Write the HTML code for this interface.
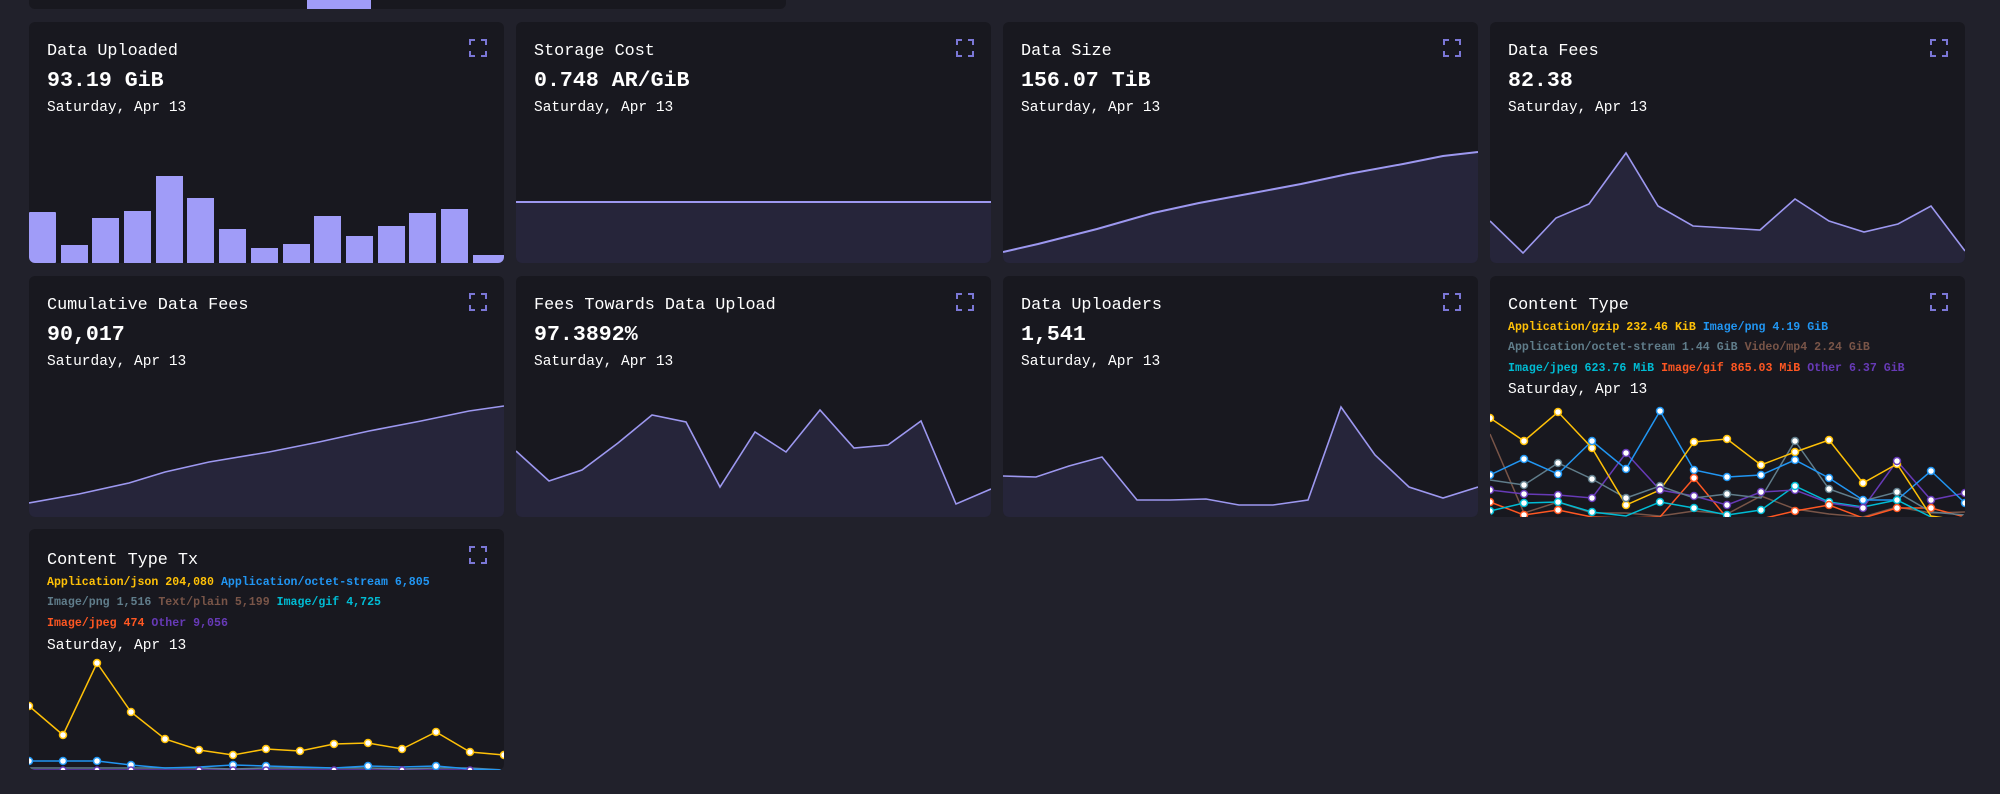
<!DOCTYPE html>
<html><head><meta charset="utf-8"><style>
*{margin:0;padding:0;box-sizing:border-box}
body{width:2000px;height:794px;background:#21212b;position:relative;overflow:hidden;font-family:"Liberation Mono",monospace;color:#fff}
.card{position:absolute;width:475px;height:241px;background:#18181f;border-radius:6px;overflow:hidden}
.t{position:absolute;left:18px;top:19px;font-size:16.8px;line-height:22px;white-space:nowrap}
.v{position:absolute;left:18px;top:45px;font-size:21.6px;font-weight:bold;line-height:28px;white-space:nowrap}
.d{position:absolute;left:18px;top:76px;font-size:14.5px;line-height:20px;white-space:nowrap}
.ic{position:absolute;right:17px;top:17px;width:18px;height:18px}
svg.ch{position:absolute;left:0;top:0}
.lg{position:absolute;left:18px;font-size:11.6px;font-weight:bold;line-height:16px;white-space:nowrap}
</style></head><body>
<div style="position:absolute;left:29px;top:0;width:757px;height:9px;background:#18181f;border-radius:0 0 6px 6px"></div>
<div style="position:absolute;left:307px;top:0;width:64px;height:9px;background:#a09cf8"></div>

<!-- Row 1 -->
<div class="card" style="left:29px;top:22px">
<svg class="ch" width="475" height="241" fill="#a09cf8">
<rect x="0" y="190" width="27" height="51" rx="1"/><rect x="32" y="223" width="27" height="18"/><rect x="63" y="196" width="27" height="45"/><rect x="95" y="189" width="27" height="52"/><rect x="127" y="154" width="27" height="87"/><rect x="158" y="176" width="27" height="65"/><rect x="190" y="207" width="27" height="34"/><rect x="222" y="226" width="27" height="15"/><rect x="254" y="222" width="27" height="19"/><rect x="285" y="194" width="27" height="47"/><rect x="317" y="214" width="27" height="27"/><rect x="349" y="204" width="27" height="37"/><rect x="380" y="191" width="27" height="50"/><rect x="412" y="187" width="27" height="54"/><rect x="444" y="233" width="31" height="8"/>
</svg>
<div class="t">Data Uploaded</div><div class="v">93.19 GiB</div><div class="d">Saturday, Apr 13</div>
<svg class="ic" viewBox="0 0 18 18" fill="none" stroke="#7b77d6" stroke-width="2"><path d="M1 6V1h5M12 1h5v5M17 12v5h-5M6 17H1v-5"/></svg>
</div>

<div class="card" style="left:516px;top:22px">
<svg class="ch" width="475" height="241"><rect x="0" y="180" width="475" height="61" fill="#26253a"/><line x1="0" y1="180" x2="475" y2="180" stroke="#9d98f0" stroke-width="2"/></svg>
<div class="t">Storage Cost</div><div class="v">0.748 AR/GiB</div><div class="d">Saturday, Apr 13</div>
<svg class="ic" viewBox="0 0 18 18" fill="none" stroke="#7b77d6" stroke-width="2"><path d="M1 6V1h5M12 1h5v5M17 12v5h-5M6 17H1v-5"/></svg>
</div>

<div class="card" style="left:1003px;top:22px">
<svg class="ch" width="475" height="241"><path d="M0 230L35 222L94 207L150 191L196 181L250 171L298 162L345 152L400 142L440 134L475 130V241H0Z" fill="#26253a"/><path d="M0 230L35 222L94 207L150 191L196 181L250 171L298 162L345 152L400 142L440 134L475 130" fill="none" stroke="#9d98f0" stroke-width="2"/></svg>
<div class="t">Data Size</div><div class="v">156.07 TiB</div><div class="d">Saturday, Apr 13</div>
<svg class="ic" viewBox="0 0 18 18" fill="none" stroke="#7b77d6" stroke-width="2"><path d="M1 6V1h5M12 1h5v5M17 12v5h-5M6 17H1v-5"/></svg>
</div>

<div class="card" style="left:1490px;top:22px">
<svg class="ch" width="475" height="241"><path d="M0 199L33 231L66 196L99 182L136 131L168 184L203 204L237 206L270 208L305 177L339 199L374 210L408 202L441 184L475 229V241H0Z" fill="#26253a"/><path d="M0 199L33 231L66 196L99 182L136 131L168 184L203 204L237 206L270 208L305 177L339 199L374 210L408 202L441 184L475 229" fill="none" stroke="#9d98f0" stroke-width="1.6"/></svg>
<div class="t">Data Fees</div><div class="v">82.38</div><div class="d">Saturday, Apr 13</div>
<svg class="ic" viewBox="0 0 18 18" fill="none" stroke="#7b77d6" stroke-width="2"><path d="M1 6V1h5M12 1h5v5M17 12v5h-5M6 17H1v-5"/></svg>
</div>

<!-- Row 2 -->
<div class="card" style="left:29px;top:276px">
<svg class="ch" width="475" height="241"><path d="M0 227L50 218L100 207L136 196L180 186L240 176L290 166L340 155L392 145L440 135L475 130V241H0Z" fill="#26253a"/><path d="M0 227L50 218L100 207L136 196L180 186L240 176L290 166L340 155L392 145L440 135L475 130" fill="none" stroke="#9d98f0" stroke-width="1.6"/></svg>
<div class="t">Cumulative Data Fees</div><div class="v">90,017</div><div class="d">Saturday, Apr 13</div>
<svg class="ic" viewBox="0 0 18 18" fill="none" stroke="#7b77d6" stroke-width="2"><path d="M1 6V1h5M12 1h5v5M17 12v5h-5M6 17H1v-5"/></svg>
</div>

<div class="card" style="left:516px;top:276px">
<svg class="ch" width="475" height="241"><path d="M0 175L33 205L66 194L102 167L136 139L170 146L204 211L239 156L270 176L304 134L338 172L372 169L405 145L440 228L475 213V241H0Z" fill="#26253a"/><path d="M0 175L33 205L66 194L102 167L136 139L170 146L204 211L239 156L270 176L304 134L338 172L372 169L405 145L440 228L475 213" fill="none" stroke="#9d98f0" stroke-width="1.6"/></svg>
<div class="t">Fees Towards Data Upload</div><div class="v">97.3892%</div><div class="d">Saturday, Apr 13</div>
<svg class="ic" viewBox="0 0 18 18" fill="none" stroke="#7b77d6" stroke-width="2"><path d="M1 6V1h5M12 1h5v5M17 12v5h-5M6 17H1v-5"/></svg>
</div>

<div class="card" style="left:1003px;top:276px">
<svg class="ch" width="475" height="241"><path d="M0 200L33 201L66 190L99 181L134 224L167 224L203 223L236 229L270 229L305 224L338 131L372 179L406 211L440 222L475 211V241H0Z" fill="#26253a"/><path d="M0 200L33 201L66 190L99 181L134 224L167 224L203 223L236 229L270 229L305 224L338 131L372 179L406 211L440 222L475 211" fill="none" stroke="#9d98f0" stroke-width="1.6"/></svg>
<div class="t">Data Uploaders</div><div class="v">1,541</div><div class="d">Saturday, Apr 13</div>
<svg class="ic" viewBox="0 0 18 18" fill="none" stroke="#7b77d6" stroke-width="2"><path d="M1 6V1h5M12 1h5v5M17 12v5h-5M6 17H1v-5"/></svg>
</div>

<div class="card" style="left:1490px;top:276px">
<div class="t" style="top:19px">Content Type</div>
<div class="lg" style="top:44px"><span style="color:#ffc107">Application/gzip 232.46 KiB</span> <span style="color:#2196f3">Image/png 4.19 GiB</span></div>
<div class="lg" style="top:64px"><span style="color:#607d8b">Application/octet-stream 1.44 GiB</span> <span style="color:#795548">Video/mp4 2.24 GiB</span></div>
<div class="lg" style="top:85px"><span style="color:#00bcd4">Image/jpeg 623.76 MiB</span> <span style="color:#ff5722">Image/gif 865.03 MiB</span> <span style="color:#673ab7">Other 6.37 GiB</span></div>
<div class="d" style="top:104px">Saturday, Apr 13</div>
<svg class="ch" width="475" height="241" fill="#fff" stroke-width="1.5">
<g stroke="#795548"><polyline fill="none" points="0,158 34,237 68,226 102,237 136,237 170,240 204,235 237,238 271,220 305,233 339,238 373,241 407,231 441,237 475,236"/></g>
<g stroke="#ff5722"><polyline fill="none" points="0,226 34,239 68,234 102,241 136,242 170,241 204,202 237,242 271,243 305,235 339,229 373,242 407,232 441,232 475,241"/></g>
<g stroke="#00bcd4"><polyline fill="none" points="0,235 34,227 68,226 102,236 136,240 170,226 204,232 237,239 271,234 305,210 339,226 373,231 407,224 441,241 475,244"/></g>
<g stroke="#673ab7"><polyline fill="none" points="0,214 34,218 68,219 102,222 136,177 170,214 204,220 237,229 271,216 305,214 339,227 373,232 407,185 441,224 475,217"/></g>
<g stroke="#607d8b"><polyline fill="none" points="0,204 34,209 68,187 102,203 136,222 170,210 204,222 237,218 271,222 305,165 339,213 373,225 407,216 441,236 475,239"/></g>
<g stroke="#2196f3"><polyline fill="none" points="0,199 34,183 68,198 102,165 136,193 170,135 204,194 237,201 271,199 305,184 339,202 373,224 407,224 441,195 475,227"/></g>
<g stroke="#ffc107"><polyline fill="none" points="0,142 34,165 68,136 102,172 136,229 170,214 204,166 237,163 271,189 305,176 339,164 373,207 407,188 441,240 475,245"/></g>
<g stroke="#ffc107"><circle cx="0" cy="142" r="3.5"/><circle cx="34" cy="165" r="3.5"/><circle cx="68" cy="136" r="3.5"/><circle cx="102" cy="172" r="3.5"/><circle cx="136" cy="229" r="3.5"/><circle cx="204" cy="166" r="3.5"/><circle cx="237" cy="163" r="3.5"/><circle cx="271" cy="189" r="3.5"/><circle cx="305" cy="176" r="3.5"/><circle cx="339" cy="164" r="3.5"/><circle cx="373" cy="207" r="3.5"/><circle cx="407" cy="188" r="3.5"/></g>
<g stroke="#2196f3"><circle cx="0" cy="199" r="3.5"/><circle cx="34" cy="183" r="3.5"/><circle cx="68" cy="198" r="3.5"/><circle cx="102" cy="165" r="3.5"/><circle cx="136" cy="193" r="3.5"/><circle cx="170" cy="135" r="3.5"/><circle cx="204" cy="194" r="3.5"/><circle cx="237" cy="201" r="3.5"/><circle cx="271" cy="199" r="3.5"/><circle cx="305" cy="184" r="3.5"/><circle cx="339" cy="202" r="3.5"/><circle cx="373" cy="224" r="3.5"/><circle cx="441" cy="195" r="3.5"/><circle cx="475" cy="227" r="3.5"/></g>
<g stroke="#607d8b"><circle cx="34" cy="209" r="3.5"/><circle cx="68" cy="187" r="3.5"/><circle cx="102" cy="203" r="3.5"/><circle cx="136" cy="222" r="3.5"/><circle cx="170" cy="210" r="3.5"/><circle cx="237" cy="218" r="3.5"/><circle cx="305" cy="165" r="3.5"/><circle cx="339" cy="213" r="3.5"/><circle cx="407" cy="216" r="3.5"/></g>
<g stroke="#673ab7"><circle cx="0" cy="214" r="3.5"/><circle cx="34" cy="218" r="3.5"/><circle cx="68" cy="219" r="3.5"/><circle cx="102" cy="222" r="3.5"/><circle cx="136" cy="177" r="3.5"/><circle cx="170" cy="214" r="3.5"/><circle cx="204" cy="220" r="3.5"/><circle cx="237" cy="229" r="3.5"/><circle cx="271" cy="216" r="3.5"/><circle cx="305" cy="214" r="3.5"/><circle cx="339" cy="227" r="3.5"/><circle cx="373" cy="232" r="3.5"/><circle cx="407" cy="185" r="3.5"/><circle cx="441" cy="224" r="3.5"/><circle cx="475" cy="217" r="3.5"/></g>
<g stroke="#00bcd4"><circle cx="0" cy="235" r="3.5"/><circle cx="34" cy="227" r="3.5"/><circle cx="68" cy="226" r="3.5"/><circle cx="102" cy="236" r="3.5"/><circle cx="170" cy="226" r="3.5"/><circle cx="204" cy="232" r="3.5"/><circle cx="237" cy="239" r="3.5"/><circle cx="271" cy="234" r="3.5"/><circle cx="305" cy="210" r="3.5"/><circle cx="339" cy="226" r="3.5"/><circle cx="407" cy="224" r="3.5"/></g>
<g stroke="#ff5722"><circle cx="0" cy="226" r="3.5"/><circle cx="34" cy="239" r="3.5"/><circle cx="68" cy="234" r="3.5"/><circle cx="204" cy="202" r="3.5"/><circle cx="305" cy="235" r="3.5"/><circle cx="339" cy="229" r="3.5"/><circle cx="407" cy="232" r="3.5"/><circle cx="441" cy="232" r="3.5"/></g>
</svg>
<svg class="ic" viewBox="0 0 18 18" fill="none" stroke="#7b77d6" stroke-width="2"><path d="M1 6V1h5M12 1h5v5M17 12v5h-5M6 17H1v-5"/></svg>
</div>

<!-- Row 3 -->
<div class="card" style="left:29px;top:529px">
<div class="t" style="top:21px">Content Type Tx</div>
<div class="lg" style="top:46px"><span style="color:#ffc107">Application/json 204,080</span> <span style="color:#2196f3">Application/octet-stream 6,805</span></div>
<div class="lg" style="top:66px"><span style="color:#607d8b">Image/png 1,516</span> <span style="color:#795548">Text/plain 5,199</span> <span style="color:#00bcd4">Image/gif 4,725</span></div>
<div class="lg" style="top:87px"><span style="color:#ff5722">Image/jpeg 474</span> <span style="color:#673ab7">Other 9,056</span></div>
<div class="d" style="top:107px">Saturday, Apr 13</div>
<svg class="ch" width="475" height="241" fill="#fff" stroke-width="1.5">
<polyline fill="none" stroke="#673ab7" points="0,241 34,241 68,241 102,241 136,241 170,241 204,241 237,241 271,241 305,241 339,241 373,241 407,241 441,241 475,241"/>
<polyline fill="none" stroke="#607d8b" points="0,239 34,239 68,239 102,239 136,239 170,239 204,240 237,239 271,239 305,239 339,239 373,240 407,239 441,239 475,241"/>
<polyline fill="none" stroke="#2196f3" points="0,232 34,232 68,232 102,236 136,239 170,238 204,236 237,237 271,238 305,239 339,237 373,238 407,237 441,240 475,241"/>
<polyline fill="none" stroke="#ffc107" points="0,177 34,206 68,134 102,183 136,210 170,221 204,226 237,220 271,222 305,215 339,214 373,220 407,203 441,223 475,226"/>
<g stroke="#ffc107"><circle cx="0" cy="177" r="3.5"/><circle cx="34" cy="206" r="3.5"/><circle cx="68" cy="134" r="3.5"/><circle cx="102" cy="183" r="3.5"/><circle cx="136" cy="210" r="3.5"/><circle cx="170" cy="221" r="3.5"/><circle cx="204" cy="226" r="3.5"/><circle cx="237" cy="220" r="3.5"/><circle cx="271" cy="222" r="3.5"/><circle cx="305" cy="215" r="3.5"/><circle cx="339" cy="214" r="3.5"/><circle cx="373" cy="220" r="3.5"/><circle cx="407" cy="203" r="3.5"/><circle cx="441" cy="223" r="3.5"/><circle cx="475" cy="226" r="3.5"/></g>
<g stroke="#2196f3"><circle cx="0" cy="232" r="3.5"/><circle cx="34" cy="232" r="3.5"/><circle cx="68" cy="232" r="3.5"/><circle cx="102" cy="236" r="3.5"/><circle cx="204" cy="236" r="3.5"/><circle cx="237" cy="237" r="3.5"/><circle cx="339" cy="237" r="3.5"/><circle cx="407" cy="237" r="3.5"/></g>
<g stroke="#673ab7"><circle cx="34" cy="241" r="3"/><circle cx="68" cy="241" r="3"/><circle cx="102" cy="241" r="3"/><circle cx="170" cy="241" r="3"/><circle cx="204" cy="241" r="3"/><circle cx="237" cy="241" r="3"/><circle cx="305" cy="241" r="3"/><circle cx="373" cy="241" r="3"/><circle cx="441" cy="241" r="3"/></g>
</svg>
<svg class="ic" viewBox="0 0 18 18" fill="none" stroke="#7b77d6" stroke-width="2"><path d="M1 6V1h5M12 1h5v5M17 12v5h-5M6 17H1v-5"/></svg>
</div>
</body></html>
